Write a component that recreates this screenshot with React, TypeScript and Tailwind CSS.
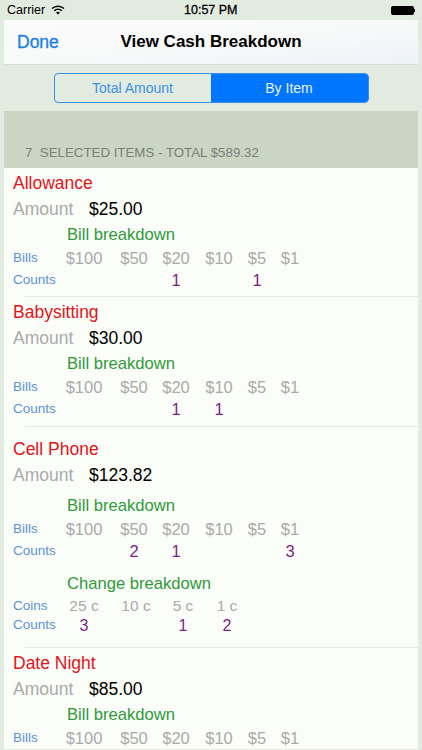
const billCols = "grid grid-cols-[50px_42px_43px_38px_33px_30px]";
const coinCols = "grid grid-cols-[52px_47px_44px_30px]";

const bills = ["$100", "$50", "$20", "$10", "$5", "$1"];
const coins = ["25 c", "10 c", "5 c", "1 c"];

function Cell({ children, className }: { children?: React.ReactNode; className: string }) {
  return <span className={`flex w-[30px] justify-center whitespace-nowrap ${className}`}>{children}</span>;
}

function ItemHead({ name, amount }: { name: string; amount: string }) {
  return (
    <>
      <div className="flex h-[30px] items-center text-[17.5px] text-[#e3131b]">{name}</div>
      <div className="flex h-[22px] items-center text-[17.5px]">
        <span className="w-[76px] text-[#aaaaaa]">Amount</span>
        <span className="text-black">{amount}</span>
      </div>
    </>
  );
}

function BreakdownTitle({ children }: { children: string }) {
  return <div className="flex h-[27px] items-center pl-[54px] pt-[3px] text-[16.6px] text-[#2f9a38]">{children}</div>;
}

function BillRows({ counts }: { counts?: string[] }) {
  return (
    <>
      <div className="flex h-[22px] items-center">
        <span className="w-[56px] text-[13.5px] text-[#5b93d6]">Bills</span>
        <div className={billCols}>
          {bills.map((b) => (
            <Cell key={b} className="text-[16.5px] text-[#aaaaaa]">{b}</Cell>
          ))}
        </div>
      </div>
      {counts && (
        <div className="flex h-[22px] items-center">
          <span className="w-[56px] text-[13.5px] text-[#5b93d6]">Counts</span>
          <div className={billCols}>
            {counts.map((c, i) => (
              <Cell key={i} className="text-[16.5px] text-[#7f1d8a]">{c}</Cell>
            ))}
          </div>
        </div>
      )}
    </>
  );
}

function CoinRows({ counts }: { counts: string[] }) {
  return (
    <>
      <div className="flex h-[20px] items-center">
        <span className="w-[56px] text-[13.5px] text-[#5b93d6]">Coins</span>
        <div className={coinCols}>
          {coins.map((c) => (
            <Cell key={c} className="text-[15.5px] text-[#aaaaaa]">{c}</Cell>
          ))}
        </div>
      </div>
      <div className="flex h-[19px] items-center">
        <span className="w-[56px] text-[13.5px] text-[#5b93d6]">Counts</span>
        <div className={coinCols}>
          {counts.map((c, i) => (
            <Cell key={i} className="text-[16px] text-[#7f1d8a]">{c}</Cell>
          ))}
        </div>
      </div>
    </>
  );
}

function Separator() {
  return <div className="ml-[21px] h-px bg-[#e6e8e3]" />;
}

export default function App() {
  return (
    <div className="flex h-[750px] w-[422px] flex-col overflow-hidden bg-[#e2ebe0] font-['Liberation_Sans',sans-serif]">
      {/* Status bar */}
      <div className="relative flex h-[20px] shrink-0 items-center px-[7px] text-[12.5px] text-black">
        <span>Carrier</span>
        <svg className="ml-[6px]" width="14" height="10" viewBox="0 0 14 10" fill="none" stroke="black">
          <path d="M1 3.6C4.4.4 9.6.4 13 3.6" strokeWidth="1.4" />
          <path d="M3.2 5.7c2.2-2 5.4-2 7.6 0" strokeWidth="1.4" />
          <path d="M7 9.6 5 7.600c1.2-1 2.800-1 4 0z" fill="black" stroke="none" />
        </svg>
        <span className="absolute left-[184px] font-medium [-webkit-text-stroke:0.3px_black]">10:57 PM</span>
        <div className="absolute left-[391px] top-[6px] flex items-center">
          <div className="h-[9px] w-[23px] rounded-[2px] bg-black" />
          <div className="h-[3px] w-px bg-black" />
        </div>
      </div>

      {/* Nav bar */}
      <div className="relative mx-1 flex h-[44px] shrink-0 items-center justify-center bg-gradient-to-br from-[#fafbfa] via-[#f8f9f9] to-[#eef3f9] shadow-[0_1px_0_#d6dfd4]">
        <span className="absolute left-[13px] text-[17.5px] font-medium text-[#1a7fe8] [-webkit-text-stroke:0.3px_#1a7fe8]">Done</span>
        <span className="text-[17px] font-bold text-black">View Cash Breakdown</span>
      </div>

      {/* Segmented control */}
      <div className="mt-[9px] flex h-[30px] w-[315px] shrink-0 self-center overflow-hidden rounded-[4px] border-[1.5px] border-[#3d8fe6] text-[14px]">
        <div className="flex w-[156px] items-center justify-center text-[#3d8fe6]">Total Amount</div>
        <div className="flex flex-1 items-center justify-center bg-[#0076ff] text-[#e8f2ff]">By Item</div>
      </div>

      {/* List */}
      <div className="mx-1 mt-[8px] flex min-h-0 flex-1 flex-col overflow-hidden">
        <div className="flex h-[57px] shrink-0 items-end bg-[#cbd5c4] pb-[5px] pl-[21px] text-[13.3px] text-[#7a7f78]">
          <span>7&nbsp;&nbsp;SELECTED ITEMS - TOTAL $589.32</span>
        </div>
        <div className="shrink-0 bg-[#fbfdf8] text-left">
          <div className="px-[9px] pb-[5px]">
            <ItemHead name="Allowance" amount="$25.00" />
            <BreakdownTitle>Bill breakdown</BreakdownTitle>
            <BillRows counts={["", "", "1", "", "1", ""]} />
          </div>
          <Separator />
          <div className="px-[9px] pb-[6px]">
            <ItemHead name="Babysitting" amount="$30.00" />
            <BreakdownTitle>Bill breakdown</BreakdownTitle>
            <BillRows counts={["", "", "1", "1", "", ""]} />
          </div>
          <Separator />
          <div className="px-[9px] pb-[12px] pt-[7px]">
            <ItemHead name="Cell Phone" amount="$123.82" />
            <div className="mt-[5px]">
              <BreakdownTitle>Bill breakdown</BreakdownTitle>
            </div>
            <BillRows counts={["", "2", "1", "", "", "3"]} />
            <div className="mt-[7px]">
              <BreakdownTitle>Change breakdown</BreakdownTitle>
            </div>
            <CoinRows counts={["3", "", "1", "2"]} />
          </div>
          <Separator />
          <div className="px-[9px]">
            <ItemHead name="Date Night" amount="$85.00" />
            <BreakdownTitle>Bill breakdown</BreakdownTitle>
            <BillRows />
          </div>
        </div>
      </div>
    </div>
  );
}
